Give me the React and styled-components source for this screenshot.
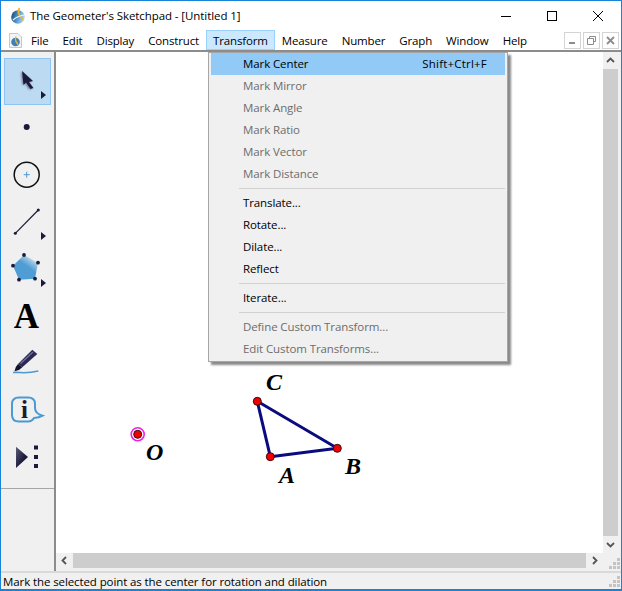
import React from "react";
import styled, { createGlobalStyle } from "styled-components";

const GlobalStyle = createGlobalStyle`
  html, body {
    margin: 0;
    padding: 0;
    background: #fff;
  }
  * {
    box-sizing: border-box;
  }
`;

const Window = styled.div`
  position: relative;
  display: flex;
  flex-direction: column;
  width: 622px;
  height: 591px;
  overflow: hidden;
  background: #f0f0f0;
  border: 1px solid #1883d7;
  border-bottom-width: 2px;
  font-family: "Open Sans", "Noto Sans", sans-serif;
  font-size: 11.5px;
  letter-spacing: -0.1px;
  color: #000;
`;

const TitleBar = styled.div`
  display: flex;
  align-items: center;
  height: 29px;
  flex: none;
  background: #fff;
  padding-left: 9px;
`;

const TitleText = styled.span`
  margin-left: 4px;
  letter-spacing: -0.08px;
`;

const WindowControls = styled.div`
  display: flex;
  margin-left: auto;
`;

const WindowControl = styled.div`
  display: flex;
  align-items: center;
  justify-content: center;
  width: 46px;
  height: 29px;
`;

const MenuBar = styled.div`
  display: flex;
  align-items: center;
  height: 22px;
  flex: none;
  background: #fff;
  padding-left: 7px;
  border-bottom: 2px solid #8c8c8c;
`;

const MenuItems = styled.div`
  display: flex;
  height: 20px;
  margin-left: 1px;
  letter-spacing: -0.15px;
`;

const MenuItem = styled.div`
  display: flex;
  align-items: center;
  height: 20px;
  padding: 0 6px;
  border: 1px solid ${(p) => (p.$active ? "#99d1ff" : "transparent")};
  background: ${(p) => (p.$active ? "#cce8ff" : "transparent")};
`;

const MdiButtons = styled.div`
  display: flex;
  gap: 2px;
  margin-left: auto;
  margin-right: 2px;
`;

const MdiButton = styled.div`
  display: flex;
  align-items: center;
  justify-content: center;
  width: 17px;
  height: 17px;
  border: 1px solid #d4d4d4;
  background: #fff;
`;

const Workspace = styled.div`
  display: flex;
  flex: 1;
  min-height: 0;
`;

const Toolbox = styled.div`
  display: flex;
  flex-direction: column;
  width: 55px;
  flex: none;
  background: #f0f0f0;
  padding: 6px 3px 0;
  border-right: 2px solid #8c8c8c;
`;

const ToolButton = styled.div`
  position: relative;
  display: flex;
  align-items: center;
  justify-content: center;
  width: 47px;
  height: 47px;
  flex: none;
  border: ${(p) => (p.$selected ? "1px solid #8cc5f3" : "none")};
  background: ${(p) => (p.$selected ? "#bcdaf2" : "transparent")};
`;

const ToolIcon = styled.svg`
  position: absolute;
  left: ${(p) => (p.$selected ? "-1px" : "0")};
  top: ${(p) => (p.$selected ? "-1px" : "0")};
`;

const TextToolGlyph = styled.span`
  position: relative;
  left: -1px;
  font-family: "Liberation Serif", serif;
  font-weight: 700;
  font-size: 35px;
  letter-spacing: 0;
  line-height: 47px;
  color: #000;
`;

const InfoGlyph = styled.span`
  position: relative;
  top: -1px;
  left: -3px;
  font-family: "Liberation Serif", serif;
  font-weight: 700;
  font-size: 25px;
  letter-spacing: 0;
  line-height: 47px;
  color: #1b1b2e;
`;

const ToolboxDivider = styled.div`
  height: 1px;
  margin: 7px -3px 0;
  background: #a6a6a6;
`;

const CanvasArea = styled.div`
  display: grid;
  flex: 1;
  min-width: 0;
  grid-template-columns: 1fr 18px;
  grid-template-rows: 1fr 18px;
`;

const Canvas = styled.div`
  position: relative;
  background: #fff;
  overflow: hidden;
`;

const Sketch = styled.svg`
  display: block;
  width: 100%;
  height: 100%;
`;

const PointLabel = styled.text`
  font-family: "Liberation Serif", serif;
  font-weight: 700;
  font-style: italic;
  font-size: 24px;
  letter-spacing: 0;
  fill: #000;
`;

const VerticalScroll = styled.div`
  display: flex;
  flex-direction: column;
  align-items: stretch;
  padding-right: 3px;
`;

const HorizontalScroll = styled.div`
  display: flex;
  padding-bottom: 3px;
`;

const ScrollArrow = styled.div`
  display: flex;
  align-items: center;
  justify-content: center;
  flex: none;
  width: ${(p) => (p.$horizontal ? "17px" : "auto")};
  height: ${(p) => (p.$horizontal ? "auto" : "17px")};
`;

const ScrollThumb = styled.div`
  flex: 1;
  background: #cdcdcd;
`;

const ScrollCorner = styled.div`
  display: flex;
  align-items: flex-end;
  justify-content: flex-end;
  padding: 0 1px 2px 0;
`;

const StatusBar = styled.div`
  display: flex;
  align-items: center;
  justify-content: space-between;
  height: 18px;
  flex: none;
  padding: 0 1px 0 2px;
  border-top: 2px solid #d9d9d9;
  color: #000;
`;

const Dropdown = styled.div`
  position: absolute;
  left: 207px;
  top: 51px;
  width: 300px;
  padding: 0 2px 1px;
  background: #f0f0f0;
  border: 1px solid #a6a6a6;
  box-shadow: 3px 3px 2px #8a8a8a;
`;

const DropdownItem = styled.div`
  display: flex;
  align-items: center;
  justify-content: space-between;
  height: 22px;
  padding: 0 18px 2px 32px;
  color: ${(p) => (p.$disabled ? "#6d6d6d" : "#000")};
  background: ${(p) => (p.$active ? "#91c9f7" : "transparent")};
`;

const Shortcut = styled.span`
  letter-spacing: 0.2px;
`;

const DropdownSeparator = styled.div`
  height: 1px;
  margin: 3px 0 3px 28px;
  background: #d0d0d0;
`;

const menus = [
  "File",
  "Edit",
  "Display",
  "Construct",
  "Transform",
  "Measure",
  "Number",
  "Graph",
  "Window",
  "Help",
];

const transformMenu = [
  { label: "Mark Center", shortcut: "Shift+Ctrl+F", active: true },
  { label: "Mark Mirror", disabled: true },
  { label: "Mark Angle", disabled: true },
  { label: "Mark Ratio", disabled: true },
  { label: "Mark Vector", disabled: true },
  { label: "Mark Distance", disabled: true },
  { separator: true },
  { label: "Translate..." },
  { label: "Rotate..." },
  { label: "Dilate..." },
  { label: "Reflect" },
  { separator: true },
  { label: "Iterate..." },
  { separator: true },
  { label: "Define Custom Transform...", disabled: true },
  { label: "Edit Custom Transforms...", disabled: true },
];

const DARK = "#1c1a3a";

function AppIcon() {
  return (
    <svg width="16" height="18" viewBox="0 0 16 18">
      <defs>
        <linearGradient id="globeFill" x1="0" y1="0.4" x2="1" y2="0.7">
          <stop offset="0" stopColor="#1f4f82" />
          <stop offset="0.55" stopColor="#5fa5d8" />
          <stop offset="1" stopColor="#c9dff0" />
        </linearGradient>
      </defs>
      <circle cx="8" cy="10" r="6.8" fill="url(#globeFill)" />
      <path d="M9.5 1 C8 4 8 6 9.5 8 L13 13" fill="none" stroke="#efb62b" strokeWidth="1.8" />
      <path d="M3 13 C6 10 9 9 14 8" fill="none" stroke="#f4f8fb" strokeWidth="1.2" />
    </svg>
  );
}

function DocIcon() {
  return (
    <svg width="15" height="15" viewBox="0 0 15 15">
      <path d="M1.5 .5 H10 L13.5 4 V14.5 H1.5 Z" fill="#f3f3f3" stroke="#c8c8c8" />
      <circle cx="7.5" cy="9" r="4.3" fill="#3f7fb6" />
      <path d="M8 3.5 C7 6 7 7 8 8.5 L10 11.5" fill="none" stroke="#efb62b" strokeWidth="1.4" />
    </svg>
  );
}

function SubMenuMark({ x, y }) {
  return <path d={`M${x} ${y - 4} L${x + 5} ${y} L${x} ${y + 4} Z`} fill={DARK} />;
}

function ArrowTool() {
  return (
    <>
      <defs>
        <filter id="arrowBlur" x="-30%" y="-30%" width="160%" height="160%">
          <feGaussianBlur stdDeviation="0.9" />
        </filter>
      </defs>
      <path d="M18 13 L29 23 L25 24 L29.5 30 L26 31 L22 24.5 L19.5 27 Z" fill="#6b7690" filter="url(#arrowBlur)" transform="translate(-1 0.5)" />
      <path d="M18 13 L29 23 L25 24 L29.5 30 L26.5 31 L22 24.5 L19.5 27 Z" fill={DARK} />
      <SubMenuMark x={37} y={37} />
    </>
  );
}

function PolygonTool() {
  return (
    <>
      <defs>
        <linearGradient id="polyFill" x1="0.8" y1="0.05" x2="0.4" y2="0.6">
          <stop offset="0" stopColor="#e8eff5" />
          <stop offset="0.35" stopColor="#8fbfe0" />
          <stop offset="0.7" stopColor="#4f9dd4" />
        </linearGradient>
      </defs>
      <path d="M20 9 L34 16.7 L31 32.7 L15 33.7 L9 19.7 Z" fill="url(#polyFill)" />
      {[
        [20, 9],
        [34, 16.7],
        [31, 32.7],
        [15, 33.7],
        [9, 19.7],
      ].map(([cx, cy]) => (
        <circle key={cx} cx={cx} cy={cy} r="1.9" fill={DARK} />
      ))}
      <SubMenuMark x={37} y={37} />
    </>
  );
}

function MarkerTool() {
  return (
    <>
      <path d="M28.3 9.7 L33.3 14 L18.3 27.3 L14 24 Z" fill="#2c2a55" />
      <path d="M29 12 L16.5 23.5" stroke="#74769f" strokeWidth="1.1" />
      <path d="M14 24 L18.3 27.3 L15 30 L10.5 31.3 L11.8 27 Z" fill="#13122a" />
      <path d="M9 32.5 L12 32.3 C18 33 27 32.8 34.3 31" fill="none" stroke="#4a9ad4" strokeWidth="1.5" />
    </>
  );
}

function AnimateTool() {
  return (
    <>
      <defs>
        <linearGradient id="animFill" x1="0" y1="0" x2="1" y2="1">
          <stop offset="0" stopColor="#5c5c78" />
          <stop offset="0.6" stopColor={DARK} />
        </linearGradient>
      </defs>
      <path d="M12 12.7 L24 23 L12 34 Z" fill="url(#animFill)" />
      <rect x="30" y="11.5" width="4" height="4" fill={DARK} />
      <rect x="30" y="21" width="4" height="4" fill={DARK} />
      <rect x="30" y="30" width="4" height="4" fill={DARK} />
    </>
  );
}

function IconLayer({ selected, children }) {
  return (
    <ToolIcon $selected={selected} width="47" height="47" viewBox="0 0 47 47">
      {children}
    </ToolIcon>
  );
}

function Grip() {
  return (
    <svg width="11" height="11" viewBox="0 0 11 11">
      {[
        [8, 0],
        [4, 4],
        [8, 4],
        [0, 8],
        [4, 8],
        [8, 8],
      ].map(([x, y]) => (
        <rect key={`${x}-${y}`} x={x} y={y} width="3" height="3" fill="#c4c4c4" />
      ))}
    </svg>
  );
}

function Chevron({ rotate }) {
  return (
    <svg width="9" height="9" viewBox="0 0 9 9">
      <path
        d="M1 6 L4.5 2.5 L8 6"
        fill="none"
        stroke="#555"
        strokeWidth="1.8"
        transform={`rotate(${rotate} 4.5 4.5)`}
      />
    </svg>
  );
}

function SketchPoint({ x, y }) {
  return <circle cx={x} cy={y} r="4" fill="#f00000" stroke="#3c0a10" strokeWidth="1" />;
}

function App() {
  return (
    <>
      <GlobalStyle />
      <Window>
        <TitleBar>
          <AppIcon />
          <TitleText>The Geometer's Sketchpad - [Untitled 1]</TitleText>
          <WindowControls>
            <WindowControl>
              <svg width="10" height="10" viewBox="0 0 10 10">
                <path d="M0 5.5 H10" stroke="#000" />
              </svg>
            </WindowControl>
            <WindowControl>
              <svg width="10" height="10" viewBox="0 0 10 10">
                <rect x=".5" y=".5" width="9" height="9" fill="none" stroke="#000" />
              </svg>
            </WindowControl>
            <WindowControl>
              <svg width="10" height="10" viewBox="0 0 10 10">
                <path d="M0 0 L10 10 M10 0 L0 10" stroke="#000" />
              </svg>
            </WindowControl>
          </WindowControls>
        </TitleBar>

        <MenuBar>
          <DocIcon />
          <MenuItems>
            {menus.map((m) => (
              <MenuItem key={m} $active={m === "Transform"}>
                {m}
              </MenuItem>
            ))}
          </MenuItems>
          <MdiButtons>
            <MdiButton>
              <svg width="9" height="9" viewBox="0 0 9 9">
                <rect x="1" y="6" width="6" height="2" fill="#8d8d8d" />
              </svg>
            </MdiButton>
            <MdiButton>
              <svg width="9" height="9" viewBox="0 0 9 9">
                <path d="M2.5 2.5 V.5 H8.5 V5.5 H6.5 M.5 2.5 H6.5 V8.5 H.5 Z" fill="none" stroke="#8d8d8d" />
              </svg>
            </MdiButton>
            <MdiButton>
              <svg width="9" height="9" viewBox="0 0 9 9">
                <path d="M1 1 L8 8 M8 1 L1 8" stroke="#8d8d8d" strokeWidth="1.8" />
              </svg>
            </MdiButton>
          </MdiButtons>
        </MenuBar>

        <Workspace>
          <Toolbox>
            <ToolButton $selected>
              <IconLayer selected>
                <ArrowTool />
              </IconLayer>
            </ToolButton>
            <ToolButton>
              <IconLayer>
                <circle cx="22.7" cy="22" r="3" fill={DARK} />
              </IconLayer>
            </ToolButton>
            <ToolButton>
              <IconLayer>
                <circle cx="22.7" cy="22.7" r="12.5" fill="none" stroke="#111" strokeWidth="1.5" />
                <path d="M22.7 19.7 V25.7 M19.7 22.7 H25.7" stroke="#4a9ad4" strokeWidth="1" />
              </IconLayer>
            </ToolButton>
            <ToolButton>
              <IconLayer>
                <path d="M11.3 34.3 L34.3 11" stroke={DARK} strokeWidth="1.2" />
                <circle cx="34.3" cy="11" r="1.5" fill={DARK} />
                <circle cx="11.3" cy="34.3" r="1.5" fill={DARK} />
                <SubMenuMark x={37} y={37} />
              </IconLayer>
            </ToolButton>
            <ToolButton>
              <IconLayer>
                <PolygonTool />
              </IconLayer>
            </ToolButton>
            <ToolButton>
              <TextToolGlyph>A</TextToolGlyph>
            </ToolButton>
            <ToolButton>
              <IconLayer>
                <MarkerTool />
              </IconLayer>
            </ToolButton>
            <ToolButton>
              <IconLayer>
                <path
                  d="M15 10.5 H24 C28.5 10.5 31 13 31 17 V21 C31 24.5 34 27.5 38.7 28.7 C36 30.5 33.5 31 30 31 C28.5 33.5 26.5 34.5 24 34.5 H15 C10.5 34.5 8 32 8 28 V17 C8 13 10.5 10.5 15 10.5 Z"
                  fill="none"
                  stroke="#4a9ad4"
                  strokeWidth="2"
                />
              </IconLayer>
              <InfoGlyph>i</InfoGlyph>
            </ToolButton>
            <ToolButton>
              <IconLayer>
                <AnimateTool />
              </IconLayer>
            </ToolButton>
            <ToolboxDivider />
          </Toolbox>

          <CanvasArea>
            <Canvas>
              <Sketch viewBox="56 52 547 500" preserveAspectRatio="xMinYMin meet">
                <path
                  d="M257.3 401.3 L270.3 456.7 L337.3 448.3 Z"
                  fill="none"
                  stroke="#0b0b80"
                  strokeWidth="3"
                  strokeLinejoin="round"
                />
                <SketchPoint x={257.3} y={401.3} />
                <SketchPoint x={270.3} y={456.7} />
                <SketchPoint x={337.3} y={448.3} />
                <circle cx="137.7" cy="434.3" r="6.5" fill="#fff" stroke="#f020e0" strokeWidth="1.6" />
                <SketchPoint x={137.7} y={434.3} />
                <PointLabel x="266" y="390">C</PointLabel>
                <PointLabel x="146" y="460">O</PointLabel>
                <PointLabel x="279" y="483">A</PointLabel>
                <PointLabel x="345" y="474">B</PointLabel>
              </Sketch>
            </Canvas>
            <VerticalScroll>
              <ScrollArrow>
                <Chevron rotate={0} />
              </ScrollArrow>
              <ScrollThumb />
              <ScrollArrow>
                <Chevron rotate={180} />
              </ScrollArrow>
            </VerticalScroll>
            <HorizontalScroll>
              <ScrollArrow $horizontal>
                <Chevron rotate={270} />
              </ScrollArrow>
              <ScrollThumb />
              <ScrollArrow $horizontal>
                <Chevron rotate={90} />
              </ScrollArrow>
            </HorizontalScroll>
            <ScrollCorner>
              <Grip />
            </ScrollCorner>
          </CanvasArea>
        </Workspace>

        <StatusBar>
          <span>Mark the selected point as the center for rotation and dilation</span>
          <Grip />
        </StatusBar>

        <Dropdown>
          {transformMenu.map((item, i) =>
            item.separator ? (
              <DropdownSeparator key={i} />
            ) : (
              <DropdownItem key={item.label} $active={item.active} $disabled={item.disabled}>
                <span>{item.label}</span>
                {item.shortcut && <Shortcut>{item.shortcut}</Shortcut>}
              </DropdownItem>
            )
          )}
        </Dropdown>
      </Window>
    </>
  );
}

export default App;
